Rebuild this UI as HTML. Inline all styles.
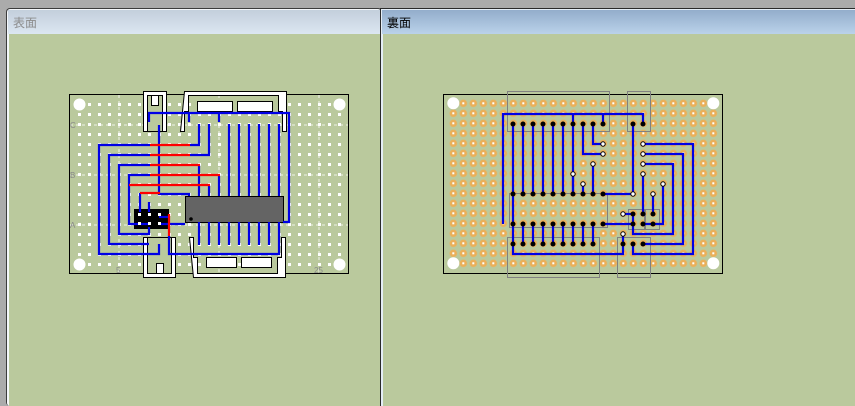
<!DOCTYPE html>
<html><head><meta charset="utf-8"><style>
html,body{margin:0;padding:0;width:855px;height:406px;overflow:hidden;background:#ababab}
svg{display:block}
</style></head><body>
<svg width="855" height="406" xmlns="http://www.w3.org/2000/svg">
<defs>
<linearGradient id="tl" x1="0" y1="0" x2="0" y2="1"><stop offset="0" stop-color="#c3cfdc"/><stop offset="1" stop-color="#dbe6f1"/></linearGradient>
<linearGradient id="tr" x1="0" y1="0" x2="0" y2="1"><stop offset="0" stop-color="#93adcb"/><stop offset="1" stop-color="#bad2ea"/></linearGradient>
<pattern id="lh" x="78" y="103" width="10" height="10" patternUnits="userSpaceOnUse"><rect x="0" y="0" width="3" height="3" fill="#fff"/></pattern>
<pattern id="rh" x="448.3" y="98.3" width="10" height="10" patternUnits="userSpaceOnUse"><circle cx="5" cy="5" r="3.8" fill="#eab05a"/><rect x="4" y="4" width="2" height="2" fill="#fff"/></pattern>
</defs>
<!-- windows -->
<rect x="6" y="8" width="376" height="398" fill="#3c3c3c" rx="4"/>
<rect x="7" y="9" width="374" height="397" fill="#f4f7fa" rx="3"/>
<rect x="8" y="10" width="372" height="24" fill="url(#tl)"/>
<rect x="9" y="34" width="371" height="372" fill="#bac99d"/>
<text x="13" y="27" font-family="Liberation Sans, Noto Sans CJK JP, sans-serif" font-size="12" fill="#8c8c8c">表面</text>
<rect x="380" y="8" width="475" height="398" fill="#2a2a2a"/>
<rect x="381" y="9" width="474" height="397" fill="#e4edf6"/>
<rect x="382" y="10" width="473" height="24" fill="url(#tr)"/>
<rect x="383" y="34" width="472" height="372" fill="#bac99d"/>
<text x="387" y="27" font-family="Liberation Sans, Noto Sans CJK JP, sans-serif" font-size="12" fill="#000">裏面</text>

<!-- LEFT BOARD -->
<rect x="69.5" y="94.5" width="279" height="179" fill="#bac99d" stroke="#000"/>
<g stroke="#fff" stroke-dasharray="3,3" stroke-width="0.8">
<line x1="70" y1="125" x2="348" y2="125"/><line x1="70" y1="175" x2="348" y2="175"/><line x1="70" y1="225" x2="348" y2="225"/>
<line x1="119" y1="95" x2="119" y2="273"/><line x1="219" y1="95" x2="219" y2="273"/><line x1="319" y1="95" x2="319" y2="273"/>
</g>
<rect x="88" y="103" width="250" height="3" fill="url(#lh)"/>
<rect x="78" y="113" width="270" height="143" fill="url(#lh)"/>
<rect x="88" y="263" width="250" height="3" fill="url(#lh)"/>
<g fill="#fff"><circle cx="79.5" cy="104.5" r="6"/><circle cx="339.5" cy="104.5" r="6"/><circle cx="79.5" cy="264.5" r="6"/><circle cx="339.5" cy="264.5" r="6"/></g>
<g font-family="Liberation Sans, sans-serif" font-size="8" fill="#888"><text x="70" y="128">C</text><text x="70" y="178">B</text><text x="70" y="228">A</text><text x="116" y="273">5</text><text x="314" y="273">25</text></g>
<!-- connectors -->
<g stroke="#000" stroke-width="1">
<rect x="143.5" y="91.5" width="23" height="40" fill="#fff"/>
<rect x="147.5" y="95.5" width="15" height="36" fill="#bac99d"/>
<rect x="151.5" y="95.5" width="7" height="10" fill="#fff"/>
<rect x="143.5" y="237.5" width="32" height="40" fill="#fff"/>
<rect x="147.5" y="237.5" width="24" height="36" fill="#bac99d"/>
<rect x="156.5" y="263.5" width="7" height="10" fill="#fff"/>
<path d="M184.5 91.5h102v40h-4v-20h-4v-16h-90v16h-4v20h-4z" fill="#fff"/>
<rect x="197.5" y="101.5" width="35" height="10" fill="#fff"/><rect x="237.5" y="101.5" width="35" height="10" fill="#fff"/>
<path d="M193.5 277.5h92v-40h-4v20h-4v16h-80v-16h-4v-20h-4z" fill="#fff"/>
<rect x="206.5" y="257.5" width="30" height="10" fill="#fff"/><rect x="241.5" y="257.5" width="30" height="10" fill="#fff"/>
</g>
<!-- IC -->
<rect x="185.5" y="196.5" width="98" height="26" fill="#646464" stroke="#000"/>
<circle cx="191" cy="219" r="1.8" fill="#000"/>
<!-- black jumper block -->
<rect x="134" y="209" width="35" height="20" fill="#000"/>
<!-- blue traces -->
<g stroke="#0000e6" stroke-width="2.2" fill="none">
<path d="M149 122V113H289V222H283"/>
<path d="M189 113V122M219 113V122"/>
<path d="M229 124V196M239 124V196M249 124V196M259 124V196M269 124V196M279 124V196"/>
<path d="M199 222V245M209 222V245M219 222V245M229 222V245M239 222V245M249 222V245M259 222V245M269 222V245"/>
<path d="M279 222V254H169V236"/>
<path d="M159 125V194H189V196"/>
<path d="M199 124V145H190M209 124V155H190M199 165V196M219 175V196M209 185V196"/>
<path d="M150 145H99V254H159V244"/>
<path d="M150 155H109V244H149"/>
<path d="M150 165H119V234H149V227"/>
<path d="M150 175H129V224H149"/>
<path d="M140 193V212M149 202V212"/>
<path d="M159 217H169"/>
<path d="M159 224H185"/>
</g>
<!-- red traces -->
<g stroke="#f00" stroke-width="2.2">
<line x1="150" y1="145" x2="190" y2="145"/><line x1="150" y1="155" x2="190" y2="155"/>
<line x1="150" y1="165" x2="200" y2="165"/><line x1="150" y1="175" x2="220" y2="175"/>
<line x1="129" y1="185" x2="210" y2="185"/><line x1="140" y1="193" x2="160" y2="193"/>
<line x1="169" y1="214" x2="169" y2="236"/>
</g>
<g fill="#fff">
<rect x="138" y="213" width="3" height="3"/><rect x="148" y="213" width="3" height="3"/><rect x="158" y="213" width="3" height="3"/>
<rect x="138" y="222" width="3" height="3"/><rect x="148" y="222" width="3" height="3"/><rect x="158" y="222" width="3" height="3"/>
</g>

<!-- RIGHT BOARD -->
<rect x="443.5" y="94.5" width="279" height="179" fill="#bac99d" stroke="#000"/>
<rect x="448.3" y="98.3" width="270" height="170" fill="url(#rh)"/>
<g fill="#fff"><circle cx="453.3" cy="103.3" r="6"/><circle cx="713.3" cy="103.3" r="6"/><circle cx="453.3" cy="263.3" r="6"/><circle cx="713.3" cy="263.3" r="6"/></g>
<g fill="none" stroke="#808080" stroke-width="1">
<rect x="507.5" y="91.5" width="102" height="40"/><rect x="627.5" y="91.5" width="23" height="40"/>
<rect x="509.5" y="193.5" width="98" height="34"/>
<rect x="507.5" y="237.5" width="92" height="40"/><rect x="617.5" y="237.5" width="33" height="40"/>
<rect x="628.5" y="209.5" width="16" height="20"/><rect x="645.5" y="209.5" width="14" height="20"/>
</g>
<g stroke="#0000e6" stroke-width="2.2" fill="none">
<path d="M513 124V224M523 124V194M533 124V194M543 124V194M553 124V194M563 124V194M573 124V194"/>
<path d="M503 224V114H643V124M573 114V124M603 114V124"/>
<path d="M523 224V244M533 224V244M543 224V244M553 224V244M563 224V244M573 224V244M583 224V244M593 224V244"/>
<path d="M513 224V254H623V234"/>
<path d="M593 124V144H603M583 124V154H603M593 164V194M583 184V194M573 174V194"/>
<path d="M603 194H633V124"/>
<path d="M603 224H633V214"/>
<path d="M623 214H633"/>
<path d="M643 214V174M653 214V194M643 224H663V184"/>
<path d="M643 144H693V254H633V244"/>
<path d="M643 154H683V244H643"/>
<path d="M643 164H673V234H633V224"/>
</g>
<g fill="#000">
<circle cx="513" cy="124" r="2.5"/><circle cx="523" cy="124" r="2.5"/><circle cx="533" cy="124" r="2.5"/><circle cx="543" cy="124" r="2.5"/><circle cx="553" cy="124" r="2.5"/><circle cx="563" cy="124" r="2.5"/><circle cx="573" cy="124" r="2.5"/><circle cx="583" cy="124" r="2.5"/><circle cx="593" cy="124" r="2.5"/><circle cx="603" cy="124" r="2.5"/><circle cx="633" cy="124" r="2.5"/><circle cx="643" cy="124" r="2.5"/>
<circle cx="513" cy="194" r="2.5"/><circle cx="523" cy="194" r="2.5"/><circle cx="533" cy="194" r="2.5"/><circle cx="543" cy="194" r="2.5"/><circle cx="553" cy="194" r="2.5"/><circle cx="563" cy="194" r="2.5"/><circle cx="573" cy="194" r="2.5"/><circle cx="583" cy="194" r="2.5"/><circle cx="593" cy="194" r="2.5"/><circle cx="603" cy="194" r="2.5"/>
<circle cx="513" cy="224" r="2.5"/><circle cx="523" cy="224" r="2.5"/><circle cx="533" cy="224" r="2.5"/><circle cx="543" cy="224" r="2.5"/><circle cx="553" cy="224" r="2.5"/><circle cx="563" cy="224" r="2.5"/><circle cx="573" cy="224" r="2.5"/><circle cx="583" cy="224" r="2.5"/><circle cx="593" cy="224" r="2.5"/><circle cx="603" cy="224" r="2.5"/>
<circle cx="513" cy="244" r="2.5"/><circle cx="523" cy="244" r="2.5"/><circle cx="533" cy="244" r="2.5"/><circle cx="543" cy="244" r="2.5"/><circle cx="553" cy="244" r="2.5"/><circle cx="563" cy="244" r="2.5"/><circle cx="573" cy="244" r="2.5"/><circle cx="583" cy="244" r="2.5"/><circle cx="593" cy="244" r="2.5"/>
<circle cx="623" cy="244" r="2.5"/><circle cx="633" cy="244" r="2.5"/><circle cx="643" cy="244" r="2.5"/>
<circle cx="633" cy="214" r="2.5"/><circle cx="643" cy="214" r="2.5"/><circle cx="653" cy="214" r="2.5"/>
<circle cx="633" cy="224" r="2.5"/><circle cx="643" cy="224" r="2.5"/><circle cx="653" cy="224" r="2.5"/>
</g>
<g fill="#fff" stroke="#000" stroke-width="1">
<circle cx="603" cy="144" r="2.2"/><circle cx="603" cy="154" r="2.2"/><circle cx="593" cy="164" r="2.2"/><circle cx="573" cy="174" r="2.2"/><circle cx="583" cy="184" r="2.2"/>
<circle cx="633" cy="194" r="2.2"/><circle cx="623" cy="214" r="2.2"/><circle cx="623" cy="234" r="2.2"/>
<circle cx="643" cy="144" r="2.2"/><circle cx="643" cy="154" r="2.2"/><circle cx="643" cy="164" r="2.2"/><circle cx="643" cy="174" r="2.2"/>
<circle cx="653" cy="194" r="2.2"/><circle cx="663" cy="184" r="2.2"/>
</g>
</svg>
</body></html>
